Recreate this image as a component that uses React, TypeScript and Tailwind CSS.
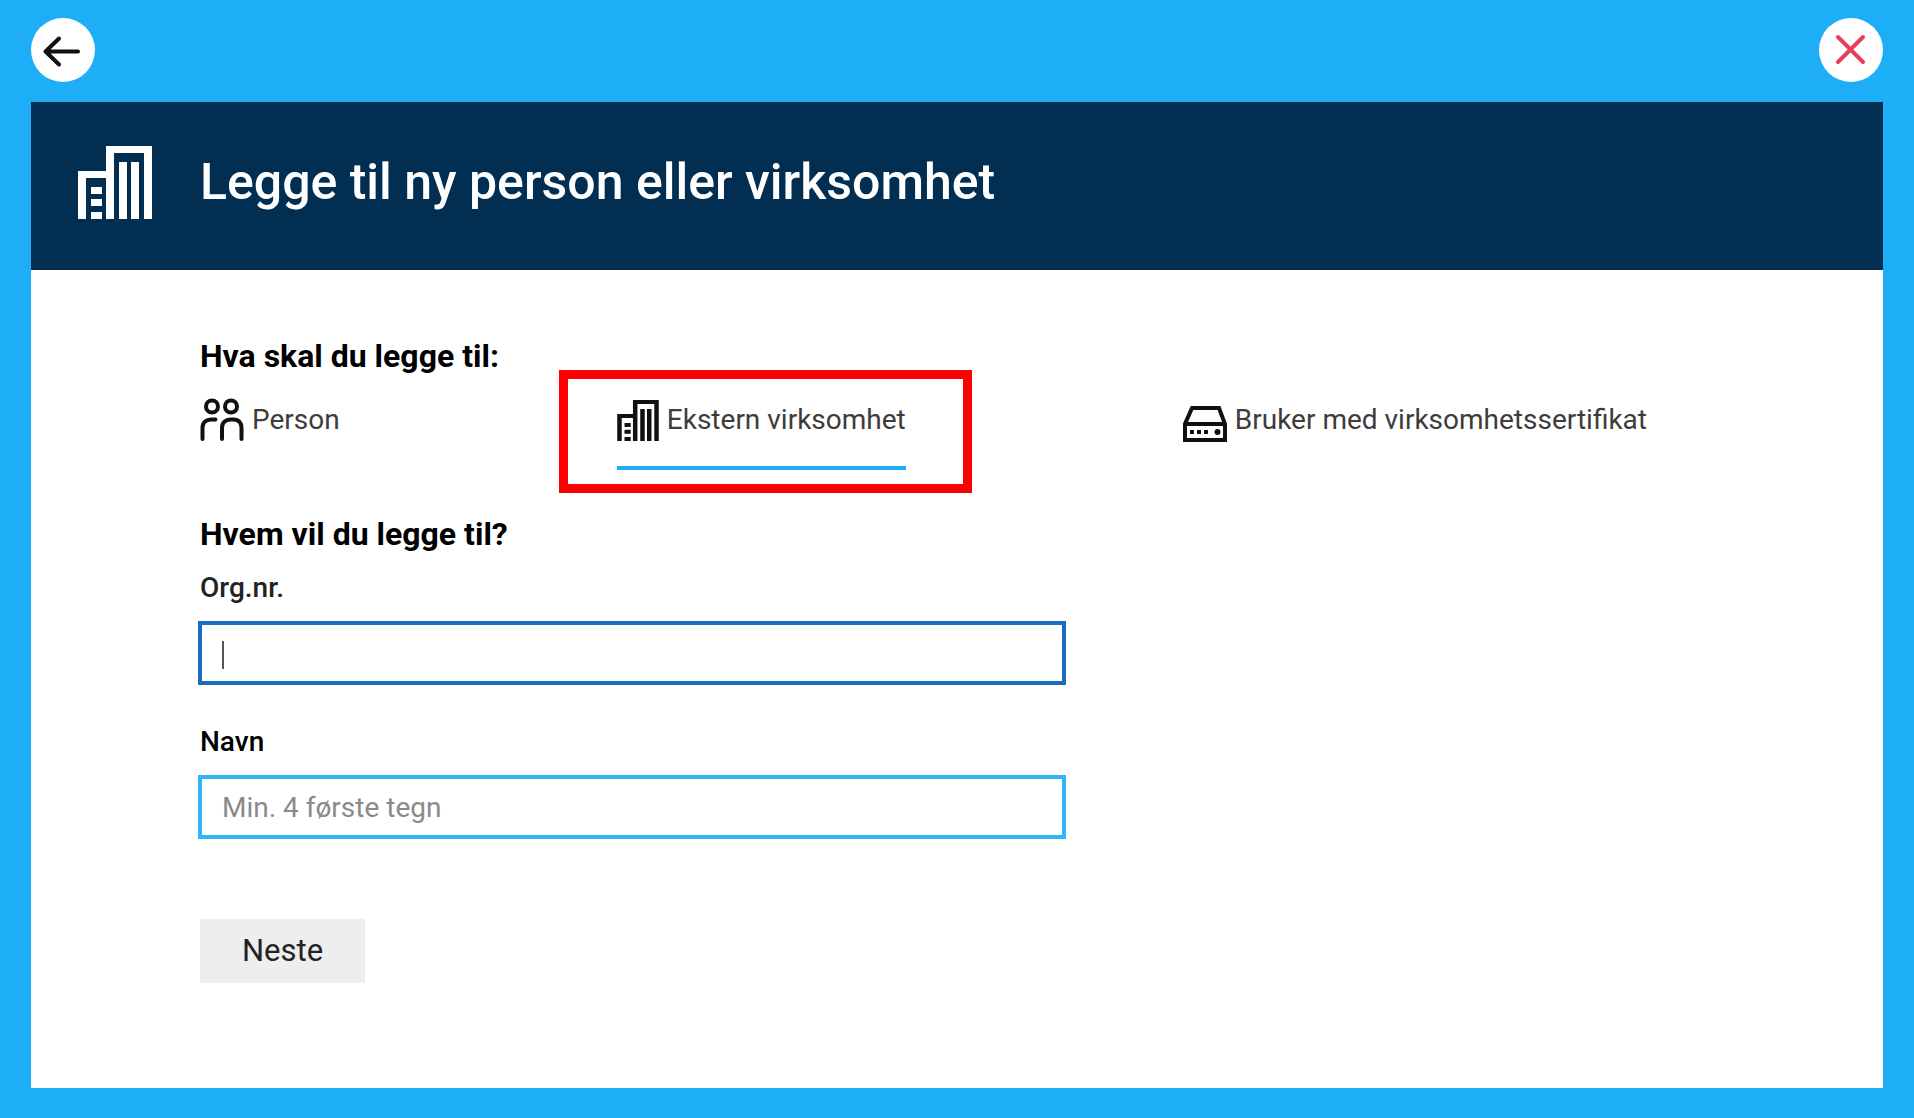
import { ReactNode, useState } from "react";

function BuildingsIcon({ className }: { className: string }) {
  return (
    <svg viewBox="0 0 74 73" className={className} fill="currentColor" aria-hidden="true">
      <path d="M0 25h28V0h46v73h-8V7H36v66h-8V32H8v41H0z" />
      <path d="M41 16h8v57h-8zM53 16h8v57h-8zM13 41h11v7H13zM13 53h11v7H13zM13 66h11v7H13z" />
    </svg>
  );
}

function PeopleIcon() {
  return (
    <svg viewBox="0 0 44 44" className="h-11 w-11" fill="none" stroke="currentColor" strokeWidth="4" aria-hidden="true">
      <circle cx="12" cy="8.500" r="6" />
      <circle cx="31" cy="8.500" r="6" />
      <path d="M2.500 41V30c0-5.500 3.500-8.500 8.500-8.500h4.500" strokeLinecap="round" />
      <path d="M22 41V30c0-5.500 3.500-8.500 8.500-8.500h3c5 0 8 3 8 8.500v11" strokeLinecap="round" />
    </svg>
  );
}

function ServerIcon() {
  return (
    <svg viewBox="0 0 44 44" className="h-11 w-11" fill="none" stroke="currentColor" strokeWidth="4" aria-hidden="true">
      <path d="M2 42V26L9 10h27l6 16v16zM2 26h40" />
      <path d="M7 32h4v4H7zM14 32h4v4h-4zM21 32h4v4h-4z" fill="currentColor" stroke="none" />
      <circle cx="34.500" cy="34" r="3" fill="currentColor" stroke="none" />
    </svg>
  );
}

type TabProps = {
  icon: ReactNode;
  label: string;
  active: boolean;
  onSelect: () => void;
  highlighted?: boolean;
};

function Tab({ icon, label, active, onSelect, highlighted }: TabProps) {
  return (
    <div className="relative">
      <button
        type="button"
        role="tab"
        aria-selected={active}
        onClick={onSelect}
        className={`flex items-center gap-2 border-b-4 pb-6 text-[28px] leading-11 whitespace-nowrap text-[#3c3c3c] ${active ? "border-[#1eaef7]" : "border-transparent"}`}
      >
        <span className="text-[#111111]">{icon}</span>
        {label}
      </button>
      {highlighted && (
        <span className="pointer-events-none absolute -top-7 -right-[66px] -bottom-[23px] -left-[58px] border-9 border-[#ff0000]" />
      )}
    </div>
  );
}

export default function App() {
  const [kind, setKind] = useState("org");
  const [orgNr, setOrgNr] = useState("");

  return (
    <div className="flex min-h-screen flex-col bg-[#1eaef7] px-[31px] pt-[18px] pb-[30px] font-['Roboto',sans-serif] text-black">
      <nav className="flex justify-between">
        <button type="button" aria-label="Tilbake" className="flex size-16 items-center justify-center rounded-full bg-white">
          <svg viewBox="0 0 64 64" className="size-16" fill="none" stroke="#111111" strokeWidth="4" strokeLinecap="round" strokeLinejoin="round" aria-hidden="true">
            <path d="M47 33.500H14.500M28 20.500L14.500 33.500l13.500 13" />
          </svg>
        </button>
        <button type="button" aria-label="Lukk" className="flex size-16 items-center justify-center rounded-full bg-white">
          <svg viewBox="0 0 64 64" className="size-16" fill="none" stroke="#e5405a" strokeWidth="4" strokeLinecap="round" aria-hidden="true">
            <path d="M19 19l25 25M44 19L19 44" />
          </svg>
        </button>
      </nav>

      <main className="mt-5 flex grow flex-col bg-white">
        <header className="flex items-center gap-12 bg-[#022e51] px-[47px] pt-10 pb-12 text-white">
          <BuildingsIcon className="h-[73px] w-[74px]" />
          <h1 className="text-[50px] leading-20 font-medium">Legge til ny person eller virksomhet</h1>
        </header>

        <form className="pt-[66px] pr-59 pb-20 pl-[169px]" onSubmit={(e) => e.preventDefault()}>
          <h2 className="text-[32px] leading-10 font-bold">Hva skal du legge til:</h2>
          <div role="tablist" className="mt-[22px] flex justify-between">
            <Tab icon={<PeopleIcon />} label="Person" active={kind === "person"} onSelect={() => setKind("person")} />
            <Tab
              icon={<BuildingsIcon className="h-[41px] w-[42px]" />}
              label="Ekstern virksomhet"
              active={kind === "org"}
              onSelect={() => setKind("org")}
              highlighted
            />
            <Tab icon={<ServerIcon />} label="Bruker med virksomhetssertifikat" active={kind === "cert"} onSelect={() => setKind("cert")} />
          </div>

          <h2 className="mt-11 text-[32px] leading-10 font-bold">Hvem vil du legge til?</h2>
          <label htmlFor="orgnr" className="mt-[18px] block text-[28px] leading-8 font-medium text-[#222222]">
            Org.nr.
          </label>
          <div className="relative mt-[17px] -ml-0.5 w-3/5 max-w-[868px]">
            <input
              id="orgnr"
              value={orgNr}
              onChange={(e) => setOrgNr(e.target.value)}
              className="block h-16 w-full border-4 border-[#1a6dc0] bg-white px-5 text-[28px] caret-transparent outline-none"
            />
            {orgNr === "" && <span className="pointer-events-none absolute top-5 left-6 h-7 w-0.5 bg-[#555555]" />}
          </div>
          <label htmlFor="navn" className="mt-[41px] block text-[28px] leading-8 font-medium">
            Navn
          </label>
          <input
            id="navn"
            placeholder="Min. 4 første tegn"
            className="mt-[17px] -ml-0.5 block h-16 w-3/5 max-w-[868px] border-4 border-[#2fb4f8] bg-white px-5 text-[28px] outline-none placeholder:text-[#8a8a8a]"
          />
          <button type="submit" className="mt-20 h-16 bg-[#eeeeee] px-[42px] text-[31px] text-[#222222]">
            Neste
          </button>
        </form>
      </main>
    </div>
  );
}
